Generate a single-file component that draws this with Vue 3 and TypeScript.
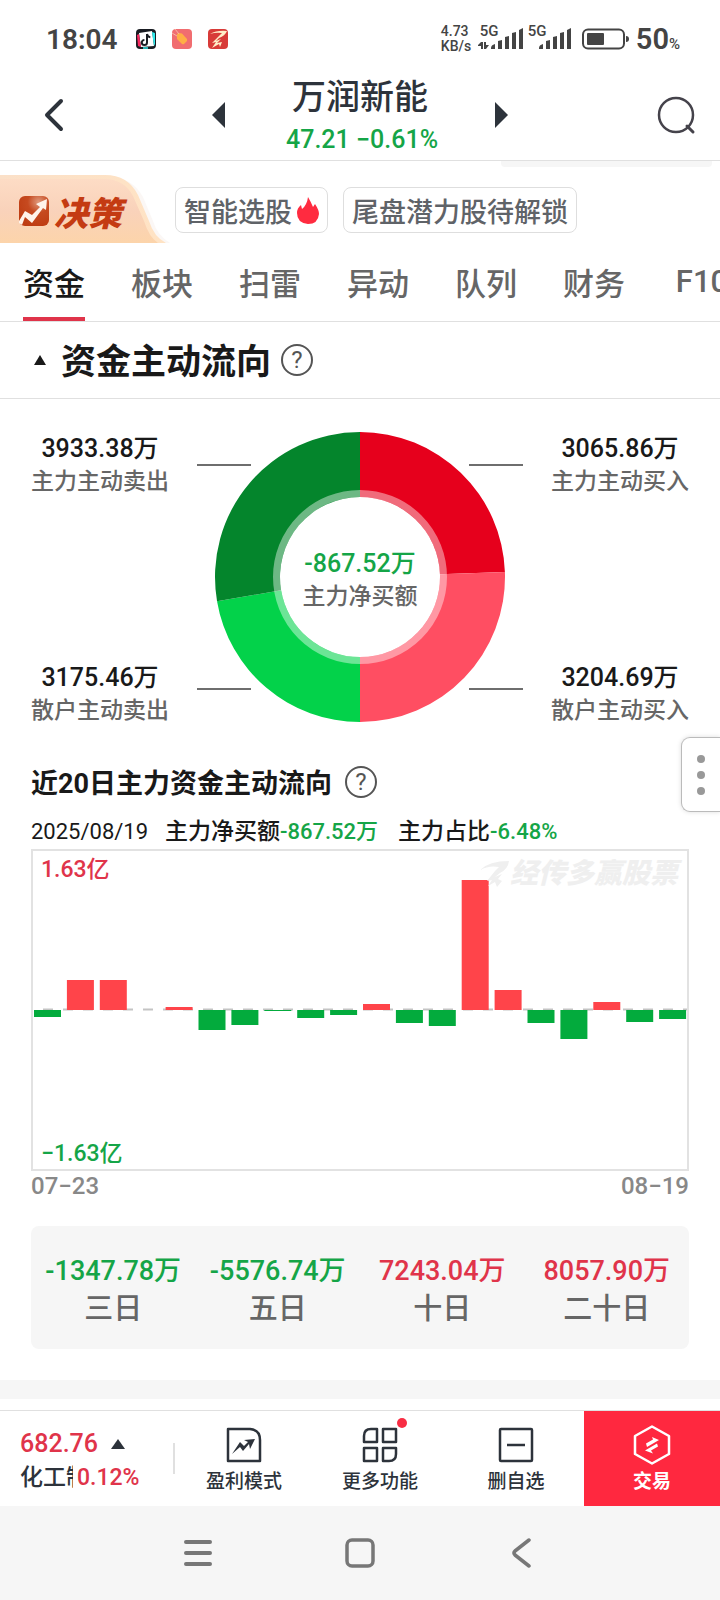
<script setup lang="ts">
interface Tile { value: string; label: string; up: boolean }

const tabs: string[] = ['资金', '板块', '扫雷', '异动', '队列', '财务', 'F10']

const sells = [
  { value: '3933.38万', label: '主力主动卖出' },
  { value: '3175.46万', label: '散户主动卖出' },
]
const buys = [
  { value: '3065.86万', label: '主力主动买入' },
  { value: '3204.69万', label: '散户主动买入' },
]

// Buying fills the right half of the ring, selling the left half.
const buyTotal = 3065.86 + 3204.69
const sellTotal = 3175.46 + 3933.38
const slices = [
  { share: 3065.86 / buyTotal / 2, color: '#e6001c' },
  { share: 3204.69 / buyTotal / 2, color: '#ff4e62' },
  { share: 3175.46 / sellTotal / 2, color: '#03d24a' },
  { share: 3933.38 / sellTotal / 2, color: '#04852c' },
]

function point(radius: number, share: number): string {
  const angle = share * Math.PI * 2
  return `${(163 + radius * Math.sin(angle)).toFixed(2)} ${(145 - radius * Math.cos(angle)).toFixed(2)}`
}

let passed = 0
const arcs = slices.map((s) => {
  const from = passed
  passed += s.share
  const to = passed
  return {
    color: s.color,
    d: `M${point(145, from)}A145 145 0 0 1 ${point(145, to)}L${point(80, to)}A80 80 0 0 0 ${point(80, from)}Z`,
  }
})

const flows: number[] = [-7, 30, 30, 0, 3, -20, -15, -1, -8, -5, 6, -13, -16, 130, 20, -13, -29, 8, -12, -9]
const bars = flows.map((v, i) => ({
  x: 3 + i * 32.9,
  y: v > 0 ? 161 - v : 161,
  height: Math.abs(v),
  color: v > 0 ? '#ff444a' : '#03ab3d',
}))

const tiles: Tile[] = [
  { value: '-1347.78万', label: '三日', up: false },
  { value: '-5576.74万', label: '五日', up: false },
  { value: '7243.04万', label: '十日', up: true },
  { value: '8057.90万', label: '二十日', up: true },
]
</script>

<template>
  <div class="screen">
    <div class="status">
      <span class="clock">18:04</span>
      <div class="apps">
        <svg width="20" height="20" viewBox="0 0 20 20">
          <rect width="20" height="20" rx="4" fill="#191c22" />
          <path d="M3 4L16 2 18 17 5 18Z" fill="#fff" />
          <path d="M1 6L3 5 5 18 2 17Z" fill="#fb2b62" />
          <path d="M16 3L19 4V15L18 17Z" fill="#30e9ea" />
          <path d="M11 5v8.500a2.600 2.600 0 1 1-2.600-2.600M11 5c.4 2 1.600 3 3.300 3.200" fill="none" stroke="#191c22" stroke-width="2" />
          <path d="M7 19h5" stroke="#30e9ea" stroke-width="1.500" />
        </svg>
        <svg width="20" height="20" viewBox="0 0 20 20">
          <rect width="20" height="20" rx="4" fill="#f16d70" />
          <path d="M5 5.500Q5 4 7 4L10 4.500 15 10Q15.500 11 14.500 12.500L12 15Q11 15.500 10 15L5 10Z" fill="#ffae45" />
          <path d="M0 4l5 3M3 0l4 5" stroke="#f7b5a0" stroke-width="1" />
        </svg>
        <svg width="20" height="20" viewBox="0 0 20 20">
          <rect width="20" height="20" rx="4" fill="#d83b38" />
          <path d="M2 5Q9 1 19 2 17 7 11 9L8 12 13 10 9 14 14 13 12 18 11 15 4 19 8 13 4 14 10 8 14 4Q8 3 2 5Z" fill="#ffeec8" />
        </svg>
      </div>
      <div class="signals">
        <div class="speed"><span>4.73</span><span>KB/s</span></div>
        <div class="cell">
          <span>5G</span>
          <svg width="46" height="22" viewBox="0 0 46 22" fill="#444">
            <path d="M0 17l3-3h2v7H3v-3H0ZM6 14h2v3h3l-3 4H6Z" />
            <path d="M13 20q0-3 4-4v5h-4ZM20 13l4-1v9h-4ZM27 9l4-1v13h-4ZM34 5l4-1v17h-4ZM41 2l4-2v21h-4Z" />
          </svg>
        </div>
        <div class="cell">
          <span>5G</span>
          <svg width="46" height="22" viewBox="0 0 46 22" fill="#444">
            <path d="M13 20q0-3 4-4v5h-4ZM20 13l4-1v9h-4ZM27 9l4-1v13h-4ZM34 5l4-1v17h-4ZM41 2l4-2v21h-4Z" />
          </svg>
        </div>
        <svg class="battery" width="48" height="22" viewBox="0 0 48 22">
          <rect x="1" y="1.500" width="41" height="19" rx="5" fill="none" stroke="#444" stroke-width="2" />
          <rect x="5" y="5" width="17" height="12" rx="1" fill="#444" />
          <path d="M44 8q3 0 3 3t-3 3Z" fill="#444" />
        </svg>
        <span class="charge">50<small>%</small></span>
      </div>
    </div>

    <header class="header">
      <button class="icon" aria-label="返回">
        <svg width="20" height="34" viewBox="0 0 20 34"><path d="M17 3L3 17 17 31" fill="none" stroke="#2d333b" stroke-width="4" stroke-linecap="round" stroke-linejoin="round" /></svg>
      </button>
      <div class="stock">
        <button class="icon" aria-label="上一只">
          <svg width="13" height="26" viewBox="0 0 13 26"><path d="M13 0V26L0 13Z" fill="#2d333b" /></svg>
        </button>
        <div class="name">
          <h1>万润新能</h1>
          <p>47.21 −0.61%</p>
        </div>
        <button class="icon" aria-label="下一只">
          <svg width="13" height="26" viewBox="0 0 13 26"><path d="M0 0V26L13 13Z" fill="#2d333b" /></svg>
        </button>
      </div>
      <button class="icon" aria-label="搜索">
        <svg width="40" height="40" viewBox="0 0 40 40" fill="none" stroke="#45434b" stroke-width="2.500"><circle cx="20" cy="20" r="17" /><path d="M31 31L37 37" stroke-width="3" stroke-linecap="round" /></svg>
      </button>
    </header>

    <div class="peek"></div>

    <div class="promo">
      <a class="decision" href="#">
        <svg class="ribbon" width="176" height="68" viewBox="0 0 176 68">
          <defs>
            <linearGradient id="peach" x1="0" y1="0" x2="0" y2="1"><stop offset="0" stop-color="#fddcc5" /><stop offset=".5" stop-color="#f9d2ba" /><stop offset="1" stop-color="#fcd4aa" /></linearGradient>
            <linearGradient id="edge" x1="0" y1="0" x2="1" y2="0"><stop offset="0" stop-color="#fbe0c8" /><stop offset="1" stop-color="#ffe3c4" /></linearGradient>
          </defs>
          <path d="M105 0Q132 2 143 22L153 46Q157 60 170 68H140Z" fill="#fbf7f5" />
          <path d="M0 0H105Q128 0 138 20L149 46Q154 62 166 68H0Z" fill="url(#edge)" />
          <path d="M0 4H104Q124 4 133 21L144 46Q149 62 158 68H0Z" fill="url(#peach)" />
        </svg>
        <svg class="mark" width="32" height="32" viewBox="0 0 32 32">
          <defs><radialGradient id="rust" cx=".65" cy=".2" r=".9"><stop offset="0" stop-color="#e09a7c" /><stop offset=".4" stop-color="#c64a20" /><stop offset="1" stop-color="#bd3a10" /></radialGradient></defs>
          <rect x="1" y="1" width="30" height="30" rx="6" fill="url(#rust)" />
          <path d="M1 26L7 16 14 20 22 12 18 9 29 4 28 15 25 13 14 28 7 22 4 30 1 28Z" fill="#fff3ea" />
        </svg>
        <span>决策</span>
      </a>
      <button class="chip">智能选股<svg width="22" height="27" viewBox="0 0 22 27"><path d="M11 0Q14 5 16 10L18 7Q22 13 22 17Q21 27 11 27Q0 26 0 16Q0 11 4 8L5 12Q10 8 11 0Z" fill="#ff2b40" /></svg></button>
      <button class="chip">尾盘潜力股待解锁</button>
    </div>

    <nav class="tabs">
      <button v-for="(tab, i) in tabs" :key="tab" :class="{ active: i === 0 }">{{ tab }}</button>
    </nav>

    <div class="section-title">
      <svg width="12" height="10" viewBox="0 0 12 10"><path d="M6 0L12 10H0Z" fill="#191919" /></svg>
      <h2>资金主动流向</h2>
      <button class="help" aria-label="说明">?</button>
    </div>

    <section class="ring">
      <div class="side">
        <div v-for="s in sells" :key="s.label"><b>{{ s.value }}</b><span>{{ s.label }}</span></div>
      </div>
      <div class="donut">
        <svg width="326" height="290" viewBox="0 0 326 290">
          <path d="M0 33H54M272 33H326M0 257H54M272 257H326" stroke="#6e6e6e" stroke-width="2" />
          <path v-for="a in arcs" :key="a.color" :d="a.d" :fill="a.color" />
          <circle cx="163" cy="145" r="83.500" fill="none" stroke="#fff" stroke-opacity=".42" stroke-width="7" />
        </svg>
        <div class="net"><b>-867.52万</b><span>主力净买额</span></div>
      </div>
      <div class="side">
        <div v-for="s in buys" :key="s.label"><b>{{ s.value }}</b><span>{{ s.label }}</span></div>
      </div>
      <button class="drawer" aria-label="更多">
        <svg width="8" height="40" viewBox="0 0 8 40" fill="#999"><circle cx="4" cy="4" r="4" /><circle cx="4" cy="20" r="4" /><circle cx="4" cy="36" r="4" /></svg>
      </button>
    </section>

    <section class="history">
      <div class="history-title">
        <h3>近20日主力资金主动流向</h3>
        <button class="help" aria-label="说明">?</button>
      </div>
      <div class="summary">
        <time>2025/08/19</time>
        <span>主力净买额<em>-867.52万</em></span>
        <span>主力占比<em>-6.48%</em></span>
      </div>
      <div class="chart">
        <svg class="plot" viewBox="0 0 658 322">
          <path d="M-8 160.500H657" stroke="#c4c4c4" stroke-width="2" stroke-dasharray="10 10" />
          <rect v-for="(b, i) in bars" :key="i" :x="b.x" :y="b.y" width="27" :height="b.height" :fill="b.color" />
          <rect x="1" y="1" width="656" height="320" fill="none" stroke="#e2e2e2" stroke-width="2" />
        </svg>
        <span class="max">1.63亿</span>
        <span class="min">−1.63亿</span>
        <div class="watermark">
          <svg width="30" height="26" viewBox="0 0 30 26"><path d="M0 9Q9 0 29 0 28 8 20 12L15 16 22 13 18 18 22 20 17 26 15 21 8 25 12 19 7 20 15 10 19 6Q9 4 0 9Z" fill="#efefef" /></svg>
          <span>经传多赢股票</span>
        </div>
      </div>
      <div class="dates"><span>07−23</span><span>08−19</span></div>
      <div class="tiles">
        <div v-for="t in tiles" :key="t.label">
          <b :class="{ up: t.up }">{{ t.value }}</b><span>{{ t.label }}</span>
        </div>
      </div>
    </section>

    <div class="band"></div>

    <footer class="toolbar">
      <div class="index">
        <div class="quote">682.76 <svg width="14" height="10" viewBox="0 0 14 10"><path d="M7 0L14 10H0Z" fill="#2d333b" /></svg></div>
        <div class="sector"><span>化工制</span><em>0.12%</em></div>
      </div>
      <button class="tool">
        <svg width="36" height="36" viewBox="0 0 36 36"><path d="M2 2H24Q34 3 34 13V34H2Z" fill="none" stroke="#2d333b" stroke-width="2.500" stroke-linejoin="round" /><path d="M6 27L14 15 18 19 22 15 18 13 29 12 24 22 23 17 17 24 14 20Z" fill="#2d333b" /></svg>
        <span>盈利模式</span>
      </button>
      <button class="tool">
        <span class="grid-icon">
          <svg width="36" height="36" viewBox="0 0 36 36" fill="none" stroke="#2d333b" stroke-width="2.500" stroke-linejoin="round"><path d="M9 2H15V15H2V9Q2 2 9 2ZM21 2H34V15H21ZM2 21H15V34H2ZM21 21H34V27Q34 34 27 34H21Z" /></svg>
          <i></i>
        </span>
        <span>更多功能</span>
      </button>
      <button class="tool">
        <svg width="36" height="36" viewBox="0 0 36 36" fill="none" stroke="#2d333b" stroke-width="2.500"><rect x="2" y="2" width="32" height="32" rx="1" /><path d="M9 18H27" /></svg>
        <span>删自选</span>
      </button>
      <button class="tool trade">
        <svg width="38" height="40" viewBox="0 0 38 40"><path d="M19 1.500L36 11V29L19 38.500 2 29V11Z" fill="none" stroke="#fff" stroke-width="2.500" stroke-linejoin="round" /><path d="M13 18.500L20 14.500 19 12 26 15 14 22ZM25 21.500L18 25.500 20 28.500 12 25.500 24 18.500Z" fill="#fff" /></svg>
        <span>交易</span>
      </button>
    </footer>

    <nav class="system">
      <button aria-label="菜单"><svg width="30" height="30" viewBox="0 0 30 30" stroke="#777" stroke-width="4" stroke-linecap="round"><path d="M3 4H27M3 15H27M3 26H27" /></svg></button>
      <button aria-label="主页"><svg width="30" height="30" viewBox="0 0 30 30" fill="none" stroke="#777" stroke-width="3.500"><rect x="2" y="2" width="26" height="26" rx="5" /></svg></button>
      <button aria-label="后退"><svg width="30" height="30" viewBox="0 0 30 30" fill="none" stroke="#777" stroke-width="3.500" stroke-linecap="round" stroke-linejoin="round"><path d="M22 2L8 13Q6 15 8 17L22 28" /></svg></button>
    </nav>
  </div>
</template>

<style>
body { margin: 0; background: #fff; }
</style>

<style scoped>
.screen { font-family: Roboto, "Noto Sans CJK SC", sans-serif; font-weight: 500; color: #191919; background: #fff; overflow: hidden; }
.screen * { box-sizing: border-box; }
h1, h2, h3, p { margin: 0; }
button { font: inherit; color: inherit; background: none; border: 0; padding: 0; margin: 0; }
svg { display: block; flex: none; }
em, i { font-style: normal; }
b { font-weight: 500; }

.status { display: flex; align-items: center; height: 76px; padding: 2px 40px 0 46px; color: #444; }
.clock { font-size: 28px; width: 90px; font-weight: 600; }
.apps { display: flex; gap: 16px; }
.signals { display: flex; align-items: center; margin-left: auto; }
.speed { display: flex; flex-direction: column; width: 37px; font-size: 14px; line-height: 15px; }
.cell { position: relative; margin-right: 2px; }
.cell span { position: absolute; left: 2px; top: -4px; font-size: 15px; line-height: 15px; }
.battery { margin: 0 6px 0 8px; }
.charge { font-size: 29px; font-weight: 600; }
.charge small { font-size: 15px; font-weight: 500; }

.header { display: flex; align-items: center; justify-content: space-between; height: 85px; padding: 0 24px 6px 44px; border-bottom: 1px solid #e0e0e0; }
.icon { display: flex; }
.stock { display: flex; align-items: center; gap: 61px; }
.name { text-align: center; width: 148px; padding-top: 5px; white-space: nowrap; }
h1 { font-size: 34px; line-height: 44px; font-weight: 500; color: #2d333b; }
.name p { font-size: 25px; line-height: 42px; color: #15a547; }

.peek { width: 211px; height: 6px; margin: 0 8px 0 auto; background: #f6f6f6; border-radius: 0 0 4px 4px; }

.promo { display: flex; align-items: center; padding-top: 8px; }
.decision { position: relative; display: flex; align-items: center; gap: 4px; width: 175px; height: 68px; padding: 4px 0 0 18px; color: #c43b12; text-decoration: none; font-size: 34px; font-weight: 900; font-style: italic; }
.decision span, .mark { position: relative; }
.ribbon { position: absolute; left: 0; top: 0; }
.chip { display: flex; align-items: center; gap: 5px; height: 46px; padding: 0 8px; margin: 2px 15px 0 0; border: 1px solid #dedede; border-radius: 8px; font-size: 27px; color: #5f6368; white-space: nowrap; }

.tabs { display: flex; gap: 46px; height: 79px; padding-left: 23px; border-bottom: 1px solid #e0e0e0; overflow: hidden; }
.tabs button { flex: none; min-width: 62px; padding-top: 2px; font-size: 31px; color: #666; border-bottom: 4px solid transparent; }
.tabs .active { color: #191919; border-color: #e0344a; }

.section-title { display: flex; align-items: center; height: 77px; padding-left: 34px; border-bottom: 1px solid #e0e0e0; }
h2 { margin: 0 10px 0 15px; font-size: 35px; line-height: 48px; font-weight: 700; padding-top: 5px; }
.help { display: flex; align-items: center; justify-content: center; width: 32px; height: 32px; border: 2px solid #555; border-radius: 50%; font-size: 24px; line-height: 28px; font-weight: 400; color: #555; }

.ring { position: relative; display: flex; justify-content: space-between; padding: 33px 31px 0; }
.side { display: flex; flex-direction: column; justify-content: space-between; height: 295px; }
.side div, .net { display: flex; flex-direction: column; align-items: center; font-size: 23px; line-height: 33px; color: #666; }
.side b { font-size: 25px; color: #191919; }
.donut { position: relative; height: 290px; }
.net { position: absolute; inset: 0; padding-top: 6px; justify-content: center; }
.net b { font-size: 25px; color: #15a547; }
.drawer { position: absolute; right: 0; bottom: -85px; display: flex; align-items: center; justify-content: center; width: 39px; height: 75px; background: #fff; border: 1px solid #bbb; border-right: 0; border-radius: 9px 0 0 9px; box-shadow: 0 0 5px #ddd; }

.history { padding: 35px 31px 0; }
.history-title { display: flex; align-items: center; gap: 13px; height: 40px; }
h3 { font-size: 27px; line-height: 38px; font-weight: 700; padding-top: 3px; }
.summary { display: flex; gap: 20px; height: 47px; padding-top: 13px; font-size: 23px; line-height: 33px; white-space: nowrap; }
.summary time { font-size: 22px; font-weight: 400; width: 114px; }
.summary em { font-size: 22px; color: #15a547; }
.chart { position: relative; }
.plot { width: 100%; height: auto; }
.max, .min { position: absolute; left: 10px; font-size: 23px; line-height: 30px; }
.max { top: 6px; color: #e0344a; }
.min { bottom: 2px; color: #15a547; }
.watermark { position: absolute; right: 11px; top: 5px; display: flex; align-items: center; color: #efefef; font-size: 28px; line-height: 40px; font-weight: 900; font-style: italic; }
.dates { display: flex; justify-content: space-between; font-size: 24px; line-height: 31px; color: #888; }
.tiles { display: grid; grid-template-columns: repeat(4, 1fr); margin-top: 24px; padding: 26px 0 21px; border-radius: 8px; background: #f6f6f6; }
.tiles div { display: flex; flex-direction: column; align-items: center; font-size: 29px; line-height: 38px; color: #666; }
.tiles b { font-size: 27px; color: #15a547; }
.tiles .up { color: #e0344a; }

.band { height: 19px; margin: 31px 0 11px; background: #f6f6f6; }

.toolbar { display: grid; grid-template-columns: 176fr repeat(4, 136fr); height: 96px; border-top: 1px solid #e0e0e0; color: #2d333b; }
.index { position: relative; min-width: 0; padding: 16px 0 0 20px; }
.index::after { content: ""; position: absolute; right: 1px; top: 32px; width: 2px; height: 31px; background: #e0e0e0; }
.quote { display: flex; align-items: center; gap: 13px; font-size: 25px; line-height: 34px; color: #e0344a; }
.sector { display: flex; gap: 4px; font-size: 23px; line-height: 34px; }
.sector span { width: 53px; overflow: hidden; white-space: nowrap; }
.sector em { color: #e0344a; }
.tool { min-width: 0; display: flex; flex-direction: column; align-items: center; font-size: 19px; line-height: 28px; padding-top: 16px; }
.tool > svg, .grid-icon { margin-bottom: 5px; }
.grid-icon { position: relative; }
.grid-icon i { position: absolute; right: -9px; top: -9px; width: 10px; height: 10px; border-radius: 50%; background: #f82d43; }
.trade { background: #ff283f; color: #fff; font-weight: 700; padding-top: 14px; }
.trade > svg { margin-bottom: 3px; }

.system { display: grid; grid-template-columns: repeat(3, 162px); justify-content: center; height: 94px; background: #f6f6f6; }
.system button { display: flex; align-items: center; justify-content: center; }
</style>
